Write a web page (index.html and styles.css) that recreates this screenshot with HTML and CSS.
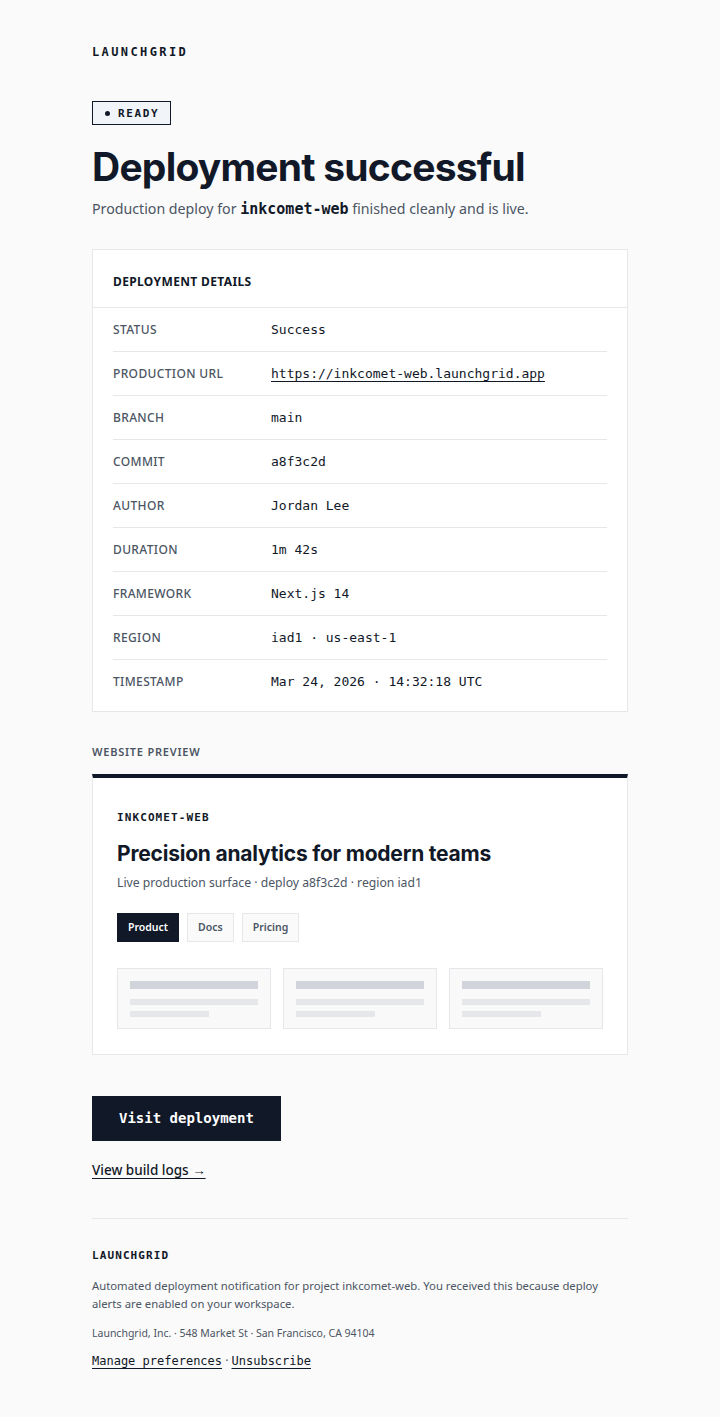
FILE: index.html
```html
<!DOCTYPE html>
<html lang="en">
<head>
    <meta charset="UTF-8">
    <meta name="viewport" content="width=device-width, initial-scale=1.0">
    <title>Deployment successful</title>
    <link rel="stylesheet" href="styles.css">
</head>
<body>
<div class="container">
    <div class="brand">LAUNCHGRID</div>

    <div class="badge"><span class="dot"></span>READY</div>
    <h1 class="title">Deployment successful</h1>
    <p class="lead">Production deploy for <code>inkcomet-web</code> finished cleanly and is live.</p>

    <div class="card details">
        <div class="card-header">DEPLOYMENT DETAILS</div>
        <div class="rows">
            <div class="row"><span class="label">STATUS</span><span class="value">Success</span></div>
            <div class="row"><span class="label">PRODUCTION URL</span><a class="value link" href="#">https://inkcomet-web.launchgrid.app</a></div>
            <div class="row"><span class="label">BRANCH</span><span class="value">main</span></div>
            <div class="row"><span class="label">COMMIT</span><span class="value">a8f3c2d</span></div>
            <div class="row"><span class="label">AUTHOR</span><span class="value">Jordan Lee</span></div>
            <div class="row"><span class="label">DURATION</span><span class="value">1m 42s</span></div>
            <div class="row"><span class="label">FRAMEWORK</span><span class="value">Next.js 14</span></div>
            <div class="row"><span class="label">REGION</span><span class="value">iad1 · us-east-1</span></div>
            <div class="row"><span class="label">TIMESTAMP</span><span class="value">Mar 24, 2026 · 14:32:18 UTC</span></div>
        </div>
    </div>

    <div class="section-label">WEBSITE PREVIEW</div>
    <div class="card preview">
        <div class="preview-name">INKCOMET-WEB</div>
        <div class="preview-title">Precision analytics for modern teams</div>
        <div class="preview-sub">Live production surface · deploy a8f3c2d · region iad1</div>
        <div class="tabs">
            <span class="tab active">Product</span>
            <span class="tab">Docs</span>
            <span class="tab">Pricing</span>
        </div>
        <div class="skeletons">
            <div class="skeleton"><div class="bar bar-top"></div><div class="bar"></div><div class="bar short"></div></div>
            <div class="skeleton"><div class="bar bar-top"></div><div class="bar"></div><div class="bar short"></div></div>
            <div class="skeleton"><div class="bar bar-top"></div><div class="bar"></div><div class="bar short"></div></div>
        </div>
    </div>

    <a class="button" href="#">Visit deployment</a>
    <div><a class="text-link" href="#">View build logs →</a></div>

    <div class="footer">
        <div class="footer-brand">LAUNCHGRID</div>
        <p class="footer-text">Automated deployment notification for project inkcomet-web. You received this because deploy alerts are enabled on your workspace.</p>
        <p class="footer-address">Launchgrid, Inc. · 548 Market St · San Francisco, CA 94104</p>
        <p class="footer-links"><a href="#">Manage preferences</a> · <a href="#">Unsubscribe</a></p>
    </div>
</div>
</body>
</html>
```
FILE: styles.css
```css
:root {
    --ink: #111827;
    --muted: #4b5563;
    --border: #e5e7eb;
    --bg: #fafafa;
    --mono: "DejaVu Sans Mono", "Liberation Mono", monospace;
    --sans: "Noto Sans", "Open Sans", sans-serif;
}

body {
    margin: 0;
    background: var(--bg);
    color: var(--ink);
    font-family: var(--sans);
}

.container {
    max-width: 536px;
    margin: 0 auto;
    padding: 44px 0 48px;
}

.brand {
    font-family: var(--mono);
    font-weight: 700;
    font-size: 12px;
    letter-spacing: 0.2em;
    line-height: 16px;
}

.badge {
    display: inline-flex;
    align-items: center;
    gap: 8px;
    margin-top: 41px;
    height: 22px;
    padding: 0 11px 0 12px;
    border: 1px solid var(--ink);
    background: #f1f5f9;
    font-family: var(--mono);
    font-size: 11px;
    font-weight: 700;
    letter-spacing: 0.15em;
}

.dot {
    width: 5px;
    height: 5px;
    border-radius: 50%;
    background: var(--ink);
}

.title {
    margin: 18px 0 0;
    font-family: Inter, sans-serif;
    font-size: 39px;
    font-weight: 700;
    letter-spacing: -0.02em;
    line-height: 48px;
}

.lead {
    margin: 7px 0 0;
    font-size: 14.2px;
    color: var(--muted);
    line-height: 22px;
}

.lead code {
    font-family: var(--mono);
    font-size: 15px;
    font-weight: 700;
    color: var(--ink);
}

.card {
    background: #fff;
    border: 1px solid var(--border);
}

.details {
    margin-top: 29px;
}

.card-header {
    padding: 24px 20px 17px;
    border-bottom: 1px solid var(--border);
    font-family: var(--sans);
    font-size: 12px;
    font-weight: 700;
    letter-spacing: 0.03em;
    line-height: 16px;
}

.rows {
    padding: 0 20px 8px;
}

.row {
    display: flex;
    align-items: center;
    height: 43px;
    border-bottom: 1px solid var(--border);
}

.row:last-child {
    border-bottom: none;
}

.label {
    width: 158px;
    flex-shrink: 0;
    font-size: 12px;
    font-weight: 500;
    letter-spacing: 0.03em;
    color: var(--muted);
}

.value {
    font-family: var(--mono);
    font-size: 13px;
    color: var(--ink);
}

.link {
    text-decoration: underline;
    text-underline-offset: 3px;
}

.section-label {
    margin-top: 32px;
    font-size: 11px;
    font-weight: 600;
    letter-spacing: 0.07em;
    color: var(--muted);
}

.preview {
    margin-top: 15px;
    border-top: 4px solid var(--ink);
    padding: 33px 24px 25px;
}

.preview-name {
    font-family: var(--mono);
    font-size: 11px;
    font-weight: 700;
    letter-spacing: 0.1em;
    line-height: 14px;
}

.preview-title {
    margin-top: 14px;
    font-family: Inter, sans-serif;
    font-size: 21px;
    font-weight: 700;
    letter-spacing: -0.01em;
    line-height: 30px;
}

.preview-sub {
    margin-top: 5px;
    font-size: 12.2px;
    color: var(--muted);
    line-height: 18px;
}

.tabs {
    display: flex;
    gap: 8px;
    margin-top: 21px;
}

.tab {
    padding: 0 10px;
    height: 27px;
    line-height: 27px;
    border: 1px solid var(--border);
    background: #fafafa;
    font-size: 10.5px;
    font-weight: 600;
    color: var(--muted);
}

.tab.active {
    background: var(--ink);
    border-color: var(--ink);
    color: #fff;
}

.skeletons {
    display: grid;
    grid-template-columns: repeat(3, 1fr);
    gap: 12px;
    margin-top: 26px;
}

.skeleton {
    background: #f9f9f9;
    border: 1px solid var(--border);
    padding: 12px 12px 11px;
}

.bar {
    height: 6px;
    background: #e5e7eb;
    margin-top: 6px;
}

.bar-top {
    height: 8px;
    margin-top: 0;
    margin-bottom: 10px;
    background: #d1d5db;
}

.bar.short {
    width: 62%;
}

.button {
    display: inline-block;
    margin-top: 41px;
    padding: 0 27px;
    height: 45px;
    line-height: 45px;
    background: var(--ink);
    color: #fff;
    font-family: var(--mono);
    font-size: 14px;
    font-weight: 700;
    text-decoration: none;
}

.text-link {
    display: inline-block;
    margin-top: 20px;
    font-size: 13.5px;
    font-weight: 500;
    color: var(--ink);
    text-decoration: underline;
    text-underline-offset: 3px;
}

.footer {
    margin-top: 38px;
    padding-top: 30px;
    border-top: 1px solid var(--border);
}

.footer-brand {
    font-family: var(--mono);
    font-size: 11px;
    font-weight: 700;
    letter-spacing: 0.1em;
}

.footer-text {
    margin: 15px 0 0;
    font-size: 11.3px;
    line-height: 18px;
    color: var(--muted);
}

.footer-address {
    margin: 13px 0 0;
    font-size: 10.5px;
    color: var(--muted);
}

.footer-links {
    margin: 12px 0 0;
    font-size: 12px;
    color: var(--muted);
}

.footer-links a {
    font-family: var(--mono);
    color: var(--ink);
    text-underline-offset: 3px;
}
```
